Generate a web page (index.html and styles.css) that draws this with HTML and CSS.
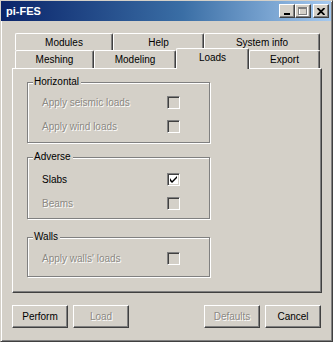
FILE: index.html
```html
<!DOCTYPE html>
<html lang="en">
<head>
	<meta charset="UTF-8">
	<title>pi-FES</title>
	<link rel="stylesheet" href="styles.css">
</head>
<body>
	<div class="window">
		<!-- title bar -->
		<div class="titlebar">
			<span class="title">pi-FES</span>
			<div class="caption">
				<span class="cap-btn">
					<svg width="8" height="7" viewBox="0 0 8 7"><rect x="1" y="5" width="6" height="2" fill="#000"/></svg>
				</span>
				<span class="cap-btn">
					<svg width="10" height="9" viewBox="0 0 10 9"><rect x="1.5" y="0.5" width="8" height="8" fill="none" stroke="#fff"/><rect x="0.5" y="0.5" width="8" height="7" fill="none" stroke="#808080"/><rect x="0.5" y="1" width="8" height="1" fill="#808080"/></svg>
				</span>
				<span class="cap-btn cap-close">
					<svg width="8" height="7" viewBox="0 0 8 7"><path d="M0.5 0 L7.5 7 M7.5 0 L0.5 7" stroke="#000" stroke-width="1.8"/></svg>
				</span>
			</div>
		</div>
		<div class="client">
			<!-- tabs -->
			<div class="tab-row">
				<div class="tab w98">Modules</div>
				<div class="tab w91">Help</div>
				<div class="tab w116">System info</div>
			</div>
			<div class="tab-row front">
				<div class="tab w79">Meshing</div>
				<div class="tab w82">Modeling</div>
				<div class="tab w73 current">Loads</div>
				<div class="tab w71">Export</div>
			</div>
			<div class="panel">
				<div class="group g-horizontal">
					<span class="group-title">Horizontal</span>
					<div class="row disabled"><span class="label">Apply seismic loads</span><span class="check"></span></div>
					<div class="row disabled"><span class="label">Apply wind loads</span><span class="check"></span></div>
				</div>
				<div class="group g-adverse">
					<span class="group-title">Adverse</span>
					<div class="row"><span class="label">Slabs</span><span class="check on"><svg width="7" height="7" viewBox="0 0 7 7"><path d="M0 2 L0 5 L2 7 L7 2 L7 0 L2 5 Z" fill="#000"/></svg></span></div>
					<div class="row disabled"><span class="label">Beams</span><span class="check"></span></div>
				</div>
				<div class="group g-walls">
					<span class="group-title">Walls</span>
					<div class="row disabled"><span class="label">Apply walls' loads</span><span class="check"></span></div>
				</div>
			</div>
			<!-- buttons -->
			<div class="buttons">
				<div class="btn-group">
					<button>Perform</button>
					<button disabled>Load</button>
				</div>
				<div class="btn-group">
					<button disabled>Defaults</button>
					<button>Cancel</button>
				</div>
			</div>
		</div>
	</div>
</body>
</html>
```

FILE: styles.css
```css
html,
body{
	margin: 0;
	padding: 0;
	background: #d4d0c8;
}
body{
	font-family: "Liberation Sans", Arial, sans-serif;
	font-size: 10px;
	color: #000;
}
.window{
	width: 333px;
	height: 342px;
	box-sizing: border-box;
	background: #d4d0c8;
	border: 1px solid;
	border-color: #d4d0c8 #404040 #404040 #d4d0c8;
	box-shadow: inset 1px 1px 0 #fff, inset -1px -1px 0 #808080;
	display: flex;
	flex-direction: column;
}
.titlebar{
	height: 20px;
	margin: 0 1px 0 0;
	background: linear-gradient(90deg, #0a246a, #3a6ea5 55%, #a6caf0);
	display: flex;
	align-items: center;
	justify-content: space-between;
	padding: 0 2px 0 5px;
}
.title{
	color: #fff;
	font-weight: bold;
	font-size: 11px;
}
.caption{
	display: flex;
	align-items: center;
}
.cap-btn{
	width: 16px;
	height: 14px;
	box-sizing: border-box;
	background: #d4d0c8;
	border: 1px solid;
	border-color: #fff #404040 #404040 #fff;
	box-shadow: inset -1px -1px 0 #808080;
	display: flex;
	align-items: center;
	justify-content: center;
}
.cap-close{
	margin-left: 2px;
}
.client{
	flex: 1;
	padding: 12px 10px 0 11px;
}
.tab-row{
	display: flex;
	height: 17px;
	margin-left: 3px;
}
.tab-row.front{
	height: 18px;
}
.tab{
	box-sizing: border-box;
	height: 100%;
	background: #d4d0c8;
	border-top: 1px solid #fff;
	border-left: 1px solid #fff;
	border-right: 1px solid #404040;
	box-shadow: inset -1px 0 0 #808080;
	border-radius: 2px 2px 0 0;
	text-align: center;
	padding-top: 3px;
}
.tab.current{
	height: 21px;
	margin-top: -2px;
	margin-bottom: -1px;
	position: relative;
	z-index: 1;
	padding-top: 3px;
}
.w98{ width: 98px; }
.w91{ width: 91px; }
.w116{ width: 116px; }
.w79{ width: 79px; }
.w82{ width: 82px; }
.w73{ width: 73px; }
.w71{ width: 71px; }
.panel{
	height: 225px;
	box-sizing: border-box;
	border: 1px solid;
	border-color: #fff #404040 #404040 #fff;
	box-shadow: inset -1px -1px 0 #808080;
	padding: 13px 0 0 14px;
}
.group{
	position: relative;
	width: 183px;
	box-sizing: border-box;
	border: 1px solid #808080;
	box-shadow: 1px 1px 0 #fff, inset 1px 1px 0 #fff;
}
.g-horizontal{
	padding: 7px 0 4px 14px;
}
.g-adverse{
	margin-top: 14px;
	padding: 9px 0 3px 14px;
}
.g-walls{
	margin-top: 18px;
	padding: 8px 0 6px 14px;
}
.group-title{
	position: absolute;
	top: -7px;
	left: 5px;
	padding: 0 2px 0 1px;
	background: #d4d0c8;
	line-height: 12px;
}
.row{
	height: 24px;
	display: flex;
	align-items: center;
}
.label{
	width: 125px;
}
.row.disabled .label{
	color: #8c8983;
	text-shadow: 1px 1px 0 #fff;
}
.check{
	width: 13px;
	height: 13px;
	box-sizing: border-box;
	border: 1px solid;
	border-color: #808080 #fff #fff #808080;
	box-shadow: inset 1px 1px 0 #404040, inset -1px -1px 0 #d4d0c8;
	background: #d4d0c8;
	display: flex;
	align-items: center;
	justify-content: center;
}
.check.on{
	background: #fff;
}
.buttons{
	display: flex;
	justify-content: space-between;
	margin-top: 12px;
	padding-right: 1px;
}
.btn-group{
	display: flex;
	gap: 5px;
}
button{
	width: 56px;
	height: 23px;
	box-sizing: border-box;
	padding: 0;
	font-family: inherit;
	font-size: 10px;
	color: #000;
	background: #d4d0c8;
	border: 1px solid;
	border-color: #fff #404040 #404040 #fff;
	box-shadow: inset -1px -1px 0 #808080;
	border-radius: 0;
}
button:disabled{
	color: #8c8983;
	text-shadow: 1px 1px 0 #fff;
}
```
